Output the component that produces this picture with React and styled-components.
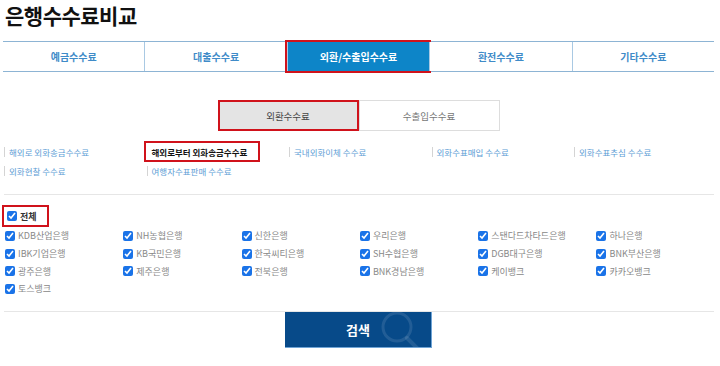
import { useState } from 'react'
import styled, { createGlobalStyle } from 'styled-components'

const GlobalStyle = createGlobalStyle`
  body {
    margin: 0;
    background: #fff;
    font-family: "Noto Sans CJK KR", "Noto Sans", sans-serif;
  }
`

const Page = styled.div`
  width: 711px;
  padding: 0 6px 0 3px;
`

const Title = styled.h1`
  margin: 0 0 0 2px;
  font-size: 21px;
  line-height: 30px;
  font-weight: 700;
  color: #111;
  letter-spacing: -0.5px;
`

const TabBar = styled.div`
  display: flex;
  margin-top: 11px;
  height: 29px;
  border-top: 1px solid #8db4d4;
  border-bottom: 1px solid #8db4d4;
`

const Tab = styled.div`
  flex: 1;
  display: flex;
  align-items: center;
  justify-content: center;
  font-size: 10px;
  font-weight: 700;
  color: ${p => (p.active ? '#fff' : '#3f8bc8')};
  background: ${p => (p.active ? '#0d85c8' : '#fff')};
  border-left: ${p => (p.first ? 'none' : '1px solid #a9c9e3')};
  outline: ${p => (p.active ? '2px solid #d0121b' : 'none')};
  position: relative;
`

const Toggle = styled.div`
  display: flex;
  justify-content: center;
  margin-top: 28px;
`

const ToggleButton = styled.div`
  width: 141px;
  height: 31px;
  box-sizing: border-box;
  display: flex;
  align-items: center;
  justify-content: center;
  font-size: 9.5px;
  color: ${p => (p.active ? '#444' : '#777')};
  background: ${p => (p.active ? '#e4e4e4' : '#fff')};
  border: ${p => (p.active ? '2px solid #d0121b' : '1px solid #ddd')};
`

const LinkGrid = styled.div`
  display: grid;
  grid-template-columns: repeat(5, 142.5px);
  margin-top: 11px;
  padding-left: 1px;
`

const LinkItem = styled.div`
  display: flex;
  align-items: center;
  height: 19px;
  font-size: 8.5px;
  color: ${p => (p.selected ? '#111' : '#5d9dd5')};
  font-weight: ${p => (p.selected ? 700 : 400)};
  white-space: nowrap;
  &::before {
    content: '';
    width: 1px;
    height: 10px;
    background: ${p => (p.selected ? 'transparent' : '#d4d4d4')};
    margin-right: 4px;
  }
`

const Selected = styled.span`
  display: inline-flex;
  align-items: center;
  height: 21px;
  padding: 0 11px 0 6px;
  margin-left: -8px;
  border: 2px solid #d0121b;
  box-sizing: border-box;
`

const Rule = styled.div`
  height: 1px;
  background: #e6e6e6;
  margin-top: ${p => p.top}px;
  margin-left: 1px;
`

const AllRow = styled.div`
  margin-top: 10px;
  height: 22px;
  display: flex;
  align-items: center;
`

const AllBox = styled.label`
  display: inline-flex;
  align-items: center;
  height: 22px;
  width: 47px;
  box-sizing: border-box;
  border: 2px solid #d0121b;
  margin-left: -1px;
  padding-left: 1px;
  font-size: 9px;
  font-weight: 700;
  color: #333;
`

const BankGrid = styled.div`
  display: grid;
  grid-template-columns: repeat(6, 118.3px);
  grid-auto-rows: 17.7px;
`

const Bank = styled.label`
  display: flex;
  align-items: center;
  font-size: 9px;
  color: #888;
  white-space: nowrap;
`

const Check = styled.input.attrs({ type: 'checkbox' })`
  width: 10px;
  height: 10px;
  margin: 0 3px 0 2px;
  accent-color: #1a73e8;
`

const ButtonRow = styled.div`
  display: flex;
  justify-content: center;
`

const SearchButton = styled.button`
  position: relative;
  overflow: hidden;
  width: 147px;
  height: 36px;
  border: none;
  border-right: 1px solid #6fa4d6;
  border-bottom: 1px solid #6fa4d6;
  background: #074a89;
  color: #fff;
  font-family: inherit;
  font-size: 13px;
  font-weight: 700;
  padding: 0;
  cursor: pointer;
  svg {
    position: absolute;
    left: 94px;
    top: -3px;
  }
  span {
    position: relative;
  }
`

const tabs = ['예금수수료', '대출수수료', '외환/수출입수수료', '환전수수료', '기타수수료']

const links = [
  '해외로 외화송금수수료',
  '해외로부터 외화송금수수료',
  '국내외화이체 수수료',
  '외화수표매입 수수료',
  '외화수표추심 수수료',
  '외화현찰 수수료',
  '여행자수표판매 수수료',
]

const banks = [
  'KDB산업은행', 'NH농협은행', '신한은행', '우리은행', '스탠다드차타드은행', '하나은행',
  'IBK기업은행', 'KB국민은행', '한국씨티은행', 'SH수협은행', 'DGB대구은행', 'BNK부산은행',
  '광주은행', '제주은행', '전북은행', 'BNK경남은행', '케이뱅크', '카카오뱅크',
  '토스뱅크',
]

export default function App() {
  const [checked, setChecked] = useState(true)
  return (
    <Page>
      <GlobalStyle />
      <Title>은행수수료비교</Title>
      <TabBar>
        {tabs.map((t, i) => (
          <Tab key={t} first={i === 0} active={i === 2}>{t}</Tab>
        ))}
      </TabBar>
      <Toggle>
        <ToggleButton active>외환수수료</ToggleButton>
        <ToggleButton>수출입수수료</ToggleButton>
      </Toggle>
      <LinkGrid>
        {links.map((l, i) => (
          <LinkItem key={l} selected={i === 1}>
            {i === 1 ? <Selected>{l}</Selected> : l}
          </LinkItem>
        ))}
      </LinkGrid>
      <Rule top={14} />
      <AllRow>
        <AllBox>
          <Check checked={checked} onChange={() => setChecked(!checked)} />
          전체
        </AllBox>
      </AllRow>
      <BankGrid>
        {banks.map(b => (
          <Bank key={b}>
            <Check checked={checked} onChange={() => setChecked(!checked)} />
            {b}
          </Bank>
        ))}
      </BankGrid>
      <Rule top={13} />
      <ButtonRow>
        <SearchButton>
          <svg width="60" height="50" viewBox="0 0 60 50">
            <circle cx="18" cy="18" r="14" fill="none" stroke="rgba(255,255,255,0.11)" strokeWidth="3" />
            <path d="M28 29 L40 41" stroke="rgba(255,255,255,0.11)" strokeWidth="4" strokeLinecap="round" />
          </svg>
          <span>검색</span>
        </SearchButton>
      </ButtonRow>
    </Page>
  )
}
